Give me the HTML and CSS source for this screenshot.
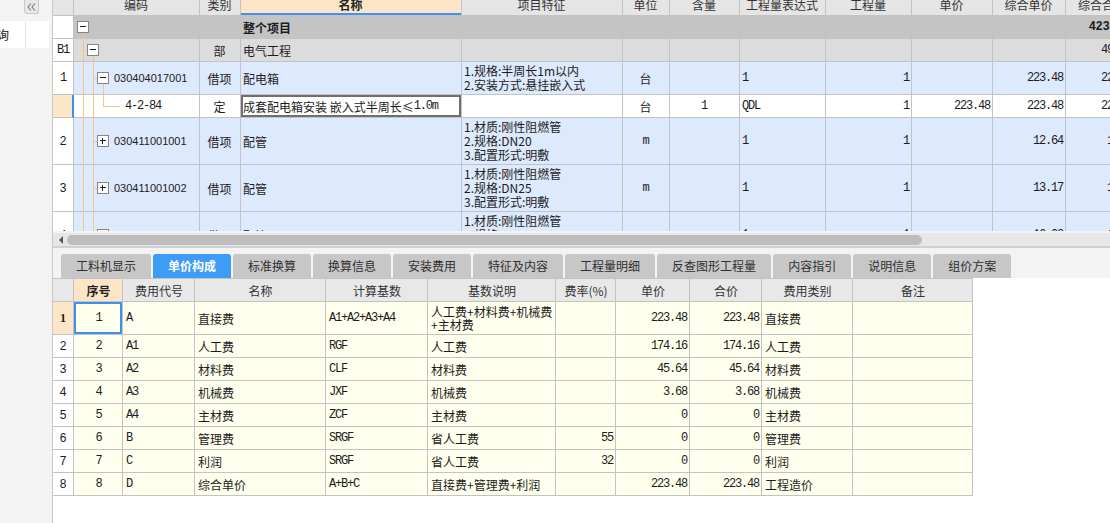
FILE: index.html
```html
<!DOCTYPE html>
<html lang="zh-CN">
<head>
<meta charset="utf-8">
<title>单价构成</title>
<link rel="stylesheet" href="styles.css">
</head>
<body>
<div class="app">
  <aside class="side">
    <div class="side-top">
      <span class="collapse"><svg width="13" height="12" viewBox="0 0 13 12"><path d="M6 2.5L3 6l3 3.5M10 2.5L7 6l3 3.5" fill="none" stroke="#7a7a7a" stroke-width="1.1"/></svg></span>
    </div>
    <div class="side-row">
      <div class="side-cell"><span class="side-text">查询</span></div>
      <div class="side-cell"></div>
    </div>
  </aside>

  <main class="main">
    <section class="upper">
      <div class="upper-scroll">
        <div class="trow thead">
          <div class="rh"></div>
          <div>编码</div>
          <div>类别</div>
          <div class="sel-col">名称</div>
          <div>项目特征</div>
          <div>单位</div>
          <div>含量</div>
          <div>工程量表达式</div>
          <div>工程量</div>
          <div>单价</div>
          <div>综合单价</div>
          <div>综合合价</div>
        </div>

        <div class="trow r-total">
          <div class="rh"></div>
          <div class="tree l0"><svg class="box" width="12" height="12" viewBox="0 0 12 12"><rect x="0.5" y="0.5" width="11" height="11" fill="#fff" stroke="#858585"/><path d="M3 5.5h6" stroke="#222"/></svg></div>
          <div class="c"></div>
          <div class="b">整个项目</div>
          <div></div>
          <div></div>
          <div></div>
          <div></div>
          <div></div>
          <div></div>
          <div></div>
          <div class="r n b tot">4235.26</div>
        </div>

        <div class="trow r-part">
          <div class="rh n">B1</div>
          <div class="tree l1"><svg class="box" width="12" height="12" viewBox="0 0 12 12"><rect x="0.5" y="0.5" width="11" height="11" fill="#fff" stroke="#858585"/><path d="M3 5.5h6" stroke="#222"/></svg></div>
          <div class="c">部</div>
          <div>电气工程</div>
          <div></div>
          <div></div>
          <div></div>
          <div></div>
          <div></div>
          <div></div>
          <div></div>
          <div class="r n">496.91</div>
        </div>

        <div class="trow r-item h33">
          <div class="rh n">1</div>
          <div class="tree l2"><svg class="box" width="12" height="12" viewBox="0 0 12 12"><rect x="0.5" y="0.5" width="11" height="11" fill="#fff" stroke="#858585"/><path d="M3 5.5h6" stroke="#222"/></svg><span class="code">030404017001</span></div>
          <div class="c">借项</div>
          <div>配电箱</div>
          <div class="feat"><span>1.规格:半周长1m以内<br>2.安装方式:悬挂嵌入式</span></div>
          <div class="c">台</div>
          <div class="c"></div>
          <div class="n">1</div>
          <div class="r n">1</div>
          <div class="r n"></div>
          <div class="r n">223.48</div>
          <div class="r n">223.48</div>
        </div>

        <div class="trow r-quota">
          <div class="rh"></div>
          <div class="tree l3"><span class="n">4-2-84</span></div>
          <div class="c">定</div>
          <div class="editing">成套配电箱安装 嵌入式半周长≤<span class="n">1.0m</span></div>
          <div></div>
          <div class="c">台</div>
          <div class="c n">1</div>
          <div class="n">QDL</div>
          <div class="r n">1</div>
          <div class="r n">223.48</div>
          <div class="r n">223.48</div>
          <div class="r n">223.48</div>
        </div>

        <div class="trow r-item h47">
          <div class="rh">2</div>
          <div class="tree l2"><svg class="box" width="12" height="12" viewBox="0 0 12 12"><rect x="0.5" y="0.5" width="11" height="11" fill="#fff" stroke="#858585"/><path d="M3 5.5h6M5.5 3v6" stroke="#222"/></svg><span class="code">030411001001</span></div>
          <div class="c">借项</div>
          <div>配管</div>
          <div class="feat"><span>1.材质:刚性阻燃管<br>2.规格:DN20<br>3.配置形式:明敷</span></div>
          <div class="c n">m</div>
          <div class="c"></div>
          <div class="n">1</div>
          <div class="r n">1</div>
          <div class="r n"></div>
          <div class="r n">12.64</div>
          <div class="r n">12.64</div>
        </div>

        <div class="trow r-item h47">
          <div class="rh">3</div>
          <div class="tree l2"><svg class="box" width="12" height="12" viewBox="0 0 12 12"><rect x="0.5" y="0.5" width="11" height="11" fill="#fff" stroke="#858585"/><path d="M3 5.5h6M5.5 3v6" stroke="#222"/></svg><span class="code">030411001002</span></div>
          <div class="c">借项</div>
          <div>配管</div>
          <div class="feat"><span>1.材质:刚性阻燃管<br>2.规格:DN25<br>3.配置形式:明敷</span></div>
          <div class="c n">m</div>
          <div class="c"></div>
          <div class="n">1</div>
          <div class="r n">1</div>
          <div class="r n"></div>
          <div class="r n">13.17</div>
          <div class="r n">13.17</div>
        </div>

        <div class="trow r-item h47">
          <div class="rh">4</div>
          <div class="tree l2"><svg class="box" width="12" height="12" viewBox="0 0 12 12"><rect x="0.5" y="0.5" width="11" height="11" fill="#fff" stroke="#858585"/><path d="M3 5.5h6M5.5 3v6" stroke="#222"/></svg><span class="code">030411001003</span></div>
          <div class="c">借项</div>
          <div>配管</div>
          <div class="feat"><span>1.材质:刚性阻燃管<br>2.规格:DN32<br>3.配置形式:明敷</span></div>
          <div class="c n">m</div>
          <div class="c"></div>
          <div class="n">1</div>
          <div class="r n">1</div>
          <div class="r n"></div>
          <div class="r n">16.02</div>
          <div class="r n">16.02</div>
        </div>
      </div>

      <svg class="tree-lines" width="80" height="231" viewBox="0 0 80 231">
        <path d="M30.5 33V231M40.5 56V231M30 50.5H34M40 78.5H44M50.5 84V106.5M50 106.5H67M40 141.5H44M40 188.5H44M40 235.5H44" fill="none" stroke="#f7c583"/>
      </svg>
    </section>

    <div class="hscroll">
      <svg class="arrow" width="4" height="8" viewBox="0 0 4 8"><path d="M4 0V8L0 4Z" fill="#555"/></svg>
      <span class="thumb"></span>
    </div>

    <section class="lower">
      <nav class="tabs">
        <span class="tab">工料机显示</span>
        <span class="tab on">单价构成</span>
        <span class="tab">标准换算</span>
        <span class="tab">换算信息</span>
        <span class="tab">安装费用</span>
        <span class="tab">特征及内容</span>
        <span class="tab">工程量明细</span>
        <span class="tab">反查图形工程量</span>
        <span class="tab">内容指引</span>
        <span class="tab">说明信息</span>
        <span class="tab">组价方案</span>
      </nav>

      <div class="fee">
        <div class="frow fhead">
          <div class="rh"></div>
          <div class="sel-col">序号</div>
          <div>费用代号</div>
          <div>名称</div>
          <div>计算基数</div>
          <div>基数说明</div>
          <div>费率(%)</div>
          <div>单价</div>
          <div>合价</div>
          <div>费用类别</div>
          <div>备注</div>
        </div>

        <div class="frow cur tall">
          <div class="rh">1</div>
          <div class="c n cur-cell">1</div>
          <div class="n">A</div>
          <div>直接费</div>
          <div class="n">A1+A2+A3+A4</div>
          <div class="two"><span>人工费+材料费+机械费<br>+主材费</span></div>
          <div class="r"></div>
          <div class="r n">223.48</div>
          <div class="r n">223.48</div>
          <div>直接费</div>
          <div></div>
        </div>

        <div class="frow">
          <div class="rh">2</div>
          <div class="c n">2</div>
          <div class="n">A1</div>
          <div>人工费</div>
          <div class="n">RGF</div>
          <div>人工费</div>
          <div class="r"></div>
          <div class="r n">174.16</div>
          <div class="r n">174.16</div>
          <div>人工费</div>
          <div></div>
        </div>

        <div class="frow">
          <div class="rh">3</div>
          <div class="c n">3</div>
          <div class="n">A2</div>
          <div>材料费</div>
          <div class="n">CLF</div>
          <div>材料费</div>
          <div class="r"></div>
          <div class="r n">45.64</div>
          <div class="r n">45.64</div>
          <div>材料费</div>
          <div></div>
        </div>

        <div class="frow">
          <div class="rh">4</div>
          <div class="c n">4</div>
          <div class="n">A3</div>
          <div>机械费</div>
          <div class="n">JXF</div>
          <div>机械费</div>
          <div class="r"></div>
          <div class="r n">3.68</div>
          <div class="r n">3.68</div>
          <div>机械费</div>
          <div></div>
        </div>

        <div class="frow">
          <div class="rh">5</div>
          <div class="c n">5</div>
          <div class="n">A4</div>
          <div>主材费</div>
          <div class="n">ZCF</div>
          <div>主材费</div>
          <div class="r"></div>
          <div class="r n">0</div>
          <div class="r n">0</div>
          <div>主材费</div>
          <div></div>
        </div>

        <div class="frow">
          <div class="rh">6</div>
          <div class="c n">6</div>
          <div class="n">B</div>
          <div>管理费</div>
          <div class="n">SRGF</div>
          <div>省人工费</div>
          <div class="r n">55</div>
          <div class="r n">0</div>
          <div class="r n">0</div>
          <div>管理费</div>
          <div></div>
        </div>

        <div class="frow">
          <div class="rh">7</div>
          <div class="c n">7</div>
          <div class="n">C</div>
          <div>利润</div>
          <div class="n">SRGF</div>
          <div>省人工费</div>
          <div class="r n">32</div>
          <div class="r n">0</div>
          <div class="r n">0</div>
          <div>利润</div>
          <div></div>
        </div>

        <div class="frow">
          <div class="rh">8</div>
          <div class="c n">8</div>
          <div class="n">D</div>
          <div>综合单价</div>
          <div class="n">A+B+C</div>
          <div>直接费+管理费+利润</div>
          <div class="r"></div>
          <div class="r n">223.48</div>
          <div class="r n">223.48</div>
          <div>工程造价</div>
          <div></div>
        </div>
      </div>
    </section>
  </main>
</div>
</body>
</html>
```

FILE: styles.css
```css
* { box-sizing: border-box; }

html, body { margin: 0; padding: 0; }

body {
  width: 1110px;
  height: 523px;
  overflow: hidden;
  background: #fff;
  font-family: "Noto Sans CJK SC", "Noto Sans", sans-serif;
  font-size: 12px;
  color: #1c1c1c;
}

.app { display: flex; height: 523px; }

/* ---------- collapsed side panel ---------- */
.side {
  flex: 0 0 53px;
  background: #f3f3f3;
  border-right: 1px solid #c8c8c8;
}
.side-top { height: 21px; padding-left: 24px; }
.collapse {
  display: flex;
  align-items: center;
  justify-content: center;
  width: 15px;
  height: 14px;
  background: #e8e8e8;
  border: 1px solid #c9c9c9;
  border-top: 0;
  border-radius: 0 0 3px 3px;
}
.collapse svg { display: block; }
.side-row { display: flex; height: 27px; width: 49px; background: #fff; }
.side-cell {
  flex: 0 0 26px;
  border-right: 1px solid #e2e2e2;
  overflow: hidden;
  display: flex;
  align-items: center;
}
.side-cell + .side-cell { flex: 1 1 auto; border-right: 0; }
.side-text { margin-left: -15px; white-space: nowrap; color: #111; }

/* ---------- main ---------- */
.main { flex: 1 1 auto; min-width: 0; display: flex; flex-direction: column; }

.upper {
  flex: 0 0 231px;
  position: relative;
  overflow: hidden;
  background: #fff;
}
.upper-scroll { margin-top: -7px; width: 1087px; }

.trow {
  display: grid;
  grid-template-columns: 21px 126px 41px 221px 161px 47px 70px 86px 86px 81px 73px 74px;
  height: 23px;
}
.trow > div {
  border-right: 1px solid #c3c3c3;
  border-bottom: 1px solid #c3c3c3;
  display: flex;
  align-items: center;
  overflow: hidden;
  white-space: nowrap;
  padding: 0 3px 0 2px;
}
.trow.h33 { height: 33px; }
.trow.h47 { height: 47px; }

.c { justify-content: center; }
.r { justify-content: flex-end; }
.b { font-weight: bold; }

.n {
  font-family: "Liberation Mono", "Noto Sans CJK SC", monospace;
  font-size: 12px;
  letter-spacing: -1.2px;
}
.r.n { padding-right: 2px; }
.tot { letter-spacing: -0.3px; }

.thead > div {
  background: #e5e5e5;
  justify-content: center;
  color: #333;
}
.thead .sel-col {
  background: #fde6c8;
  font-weight: bold;
  color: #222;
  box-shadow: inset 0 -2px 0 #3e93f2;
}

.trow .rh { justify-content: center; padding: 0; background: #fff; font-family: "Liberation Sans", sans-serif; }
.trow .rh.n { font-family: "Liberation Mono", monospace; }
.thead .rh { background: #e5e5e5; }

.r-total > div { background: #c4c4c4; }
.r-part > div { background: #dcdcdc; }
.r-item > div { background: #dde9fc; }
.r-quota > div { background: #fff; }
.r-total > .rh, .r-part > .rh, .r-item > .rh { background: #fff; }
.r-quota > .rh { background: #fde6c8; border-right: 2px solid #3b8ff0; }

.tree { gap: 5px; }
.tree.l0 { padding-left: 3px; }
.tree.l1 { padding-left: 13px; }
.tree.l2 { padding-left: 23px; }
.tree.l3 { padding-left: 51px; }
.box { display: block; flex: none; }
.code { font-family: "Liberation Sans", sans-serif; font-size: 11px; color: #222; }

.feat { padding-left: 3px; }
.feat span { line-height: 14px; white-space: nowrap; }

.editing { box-shadow: inset 0 0 0 2px #6f6f6f; padding-left: 3px; }

.tree-lines {
  position: absolute;
  left: 0;
  top: 0;
  pointer-events: none;
}

/* ---------- horizontal scrollbar ---------- */
.hscroll {
  flex: 0 0 17px;
  display: flex;
  align-items: center;
  padding-left: 6px;
  gap: 4px;
  background: #e7e7e7;
  border-top: 2px solid #f3f3f3;
  border-bottom: 2px solid #d0d0d0;
}
.arrow { display: block; flex: none; }
.thumb {
  display: block;
  width: 855px;
  height: 10px;
  border-radius: 5px;
  background: #bdbdbd;
}

/* ---------- lower panel ---------- */
.lower { flex: 1 1 auto; background: #fff; display: flex; flex-direction: column; }

.tabs {
  flex: 0 0 30px;
  display: flex;
  gap: 2px;
  padding: 6px 0 0 8px;
  background: #f3f3f3;
}
.tab {
  height: 24px;
  line-height: 24px;
  padding: 0 15px;
  background: #c7c7c7;
  border-radius: 3px 3px 0 0;
  color: #2f2f2f;
  white-space: nowrap;
}
.tab.on { background: #3f9cf6; color: #fff; font-weight: bold; }

.fee { width: 920px; }
.frow {
  display: grid;
  grid-template-columns: 21px 49px 72px 131px 102px 128px 60px 74px 72px 91px 120px;
  height: 23px;
}
.frow.tall { height: 33px; }
.frow > div {
  border-right: 1px solid #c3c3c3;
  border-bottom: 1px solid #c3c3c3;
  background: #ffffed;
  display: flex;
  align-items: center;
  overflow: hidden;
  white-space: nowrap;
  padding: 0 2px 0 3px;
}
.frow .rh { background: #fff; justify-content: center; padding: 0; font-family: "Liberation Sans", sans-serif; }
.frow.fhead { height: 24px; }
.fhead > div {
  background: #e8e8e8;
  justify-content: center;
  color: #333;
  border-top: 1px solid #c3c3c3;
}
.fhead .rh { background: #e8e8e8; }
.fhead .sel-col { background: #fde6c8; font-weight: bold; color: #222; }
.frow.cur .rh { background: #fde6c8; font-weight: bold; font-family: "Liberation Serif", serif; }
.frow .cur-cell { box-shadow: inset 0 0 0 2px #3f8ff0; }
.two span { line-height: 13px; }
```
